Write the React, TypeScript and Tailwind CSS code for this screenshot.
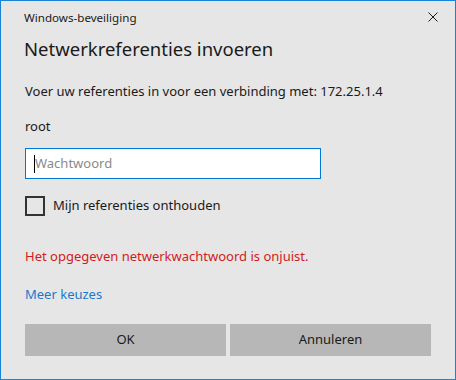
import React from "react";

export default function App() {
  const font = { fontFamily: '"Noto Sans", "Open Sans", sans-serif' };
  return (
    <div
      className="w-[456px] h-[380px] border border-[#1883d7] bg-[#e6e6e6] text-[#1a1a1a] relative box-border"
      style={font}
    >
      <div className="flex items-center justify-between h-[33px] pl-[23px] pr-[17px]">
        <span className="text-[11.6px]">Windows-beveiliging</span>
        <svg width="10" height="10" viewBox="0 0 10 10" className="mt-[-1px]">
          <path d="M0.5 0.5 L9.5 9.5 M9.5 0.5 L0.5 9.5" stroke="#1a1a1a" strokeWidth="1" />
        </svg>
      </div>
      <div className="pl-[24px]">
        <div className="h-[29px] flex items-center text-[18.5px] -ml-px">Netwerkreferenties invoeren</div>
        <div className="h-[29px] mt-[14px] flex items-center text-[13px]">
          Voer uw referenties in voor een verbinding met: 172.25.1.4
        </div>
        <div className="h-[20px] mt-[11px] flex items-center text-[13px]">root</div>
        <div className="mt-[11px] w-[296px] h-[31px] border border-[#0078d7] bg-white flex items-center pl-[8px]">
          <span className="w-px h-[18px] bg-black" />
          <span className="text-[13px] text-[#8a8a8a]">Wachtwoord</span>
        </div>
        <div className="mt-[17px] flex items-center h-[20px]">
          <span className="w-[20px] h-[20px] border-2 border-[#333333] box-border" />
          <span className="ml-[8px] text-[13px]">Mijn referenties onthouden</span>
        </div>
        <div className="mt-[31px] h-[20px] flex items-center text-[13px] text-[#d01c1c]">
          Het opgegeven netwerkwachtwoord is onjuist.
        </div>
        <div className="mt-[18px] h-[20px] flex items-center text-[13px] text-[#1979ca]">Meer keuzes</div>
        <div className="mt-[19px] flex gap-[4px]">
          <div className="w-[201px] h-[32px] bg-[#b7b7b7] flex items-center justify-center text-[13px]">OK</div>
          <div className="w-[201px] h-[32px] bg-[#b7b7b7] flex items-center justify-center text-[13px]">Annuleren</div>
        </div>
      </div>
    </div>
  );
}
